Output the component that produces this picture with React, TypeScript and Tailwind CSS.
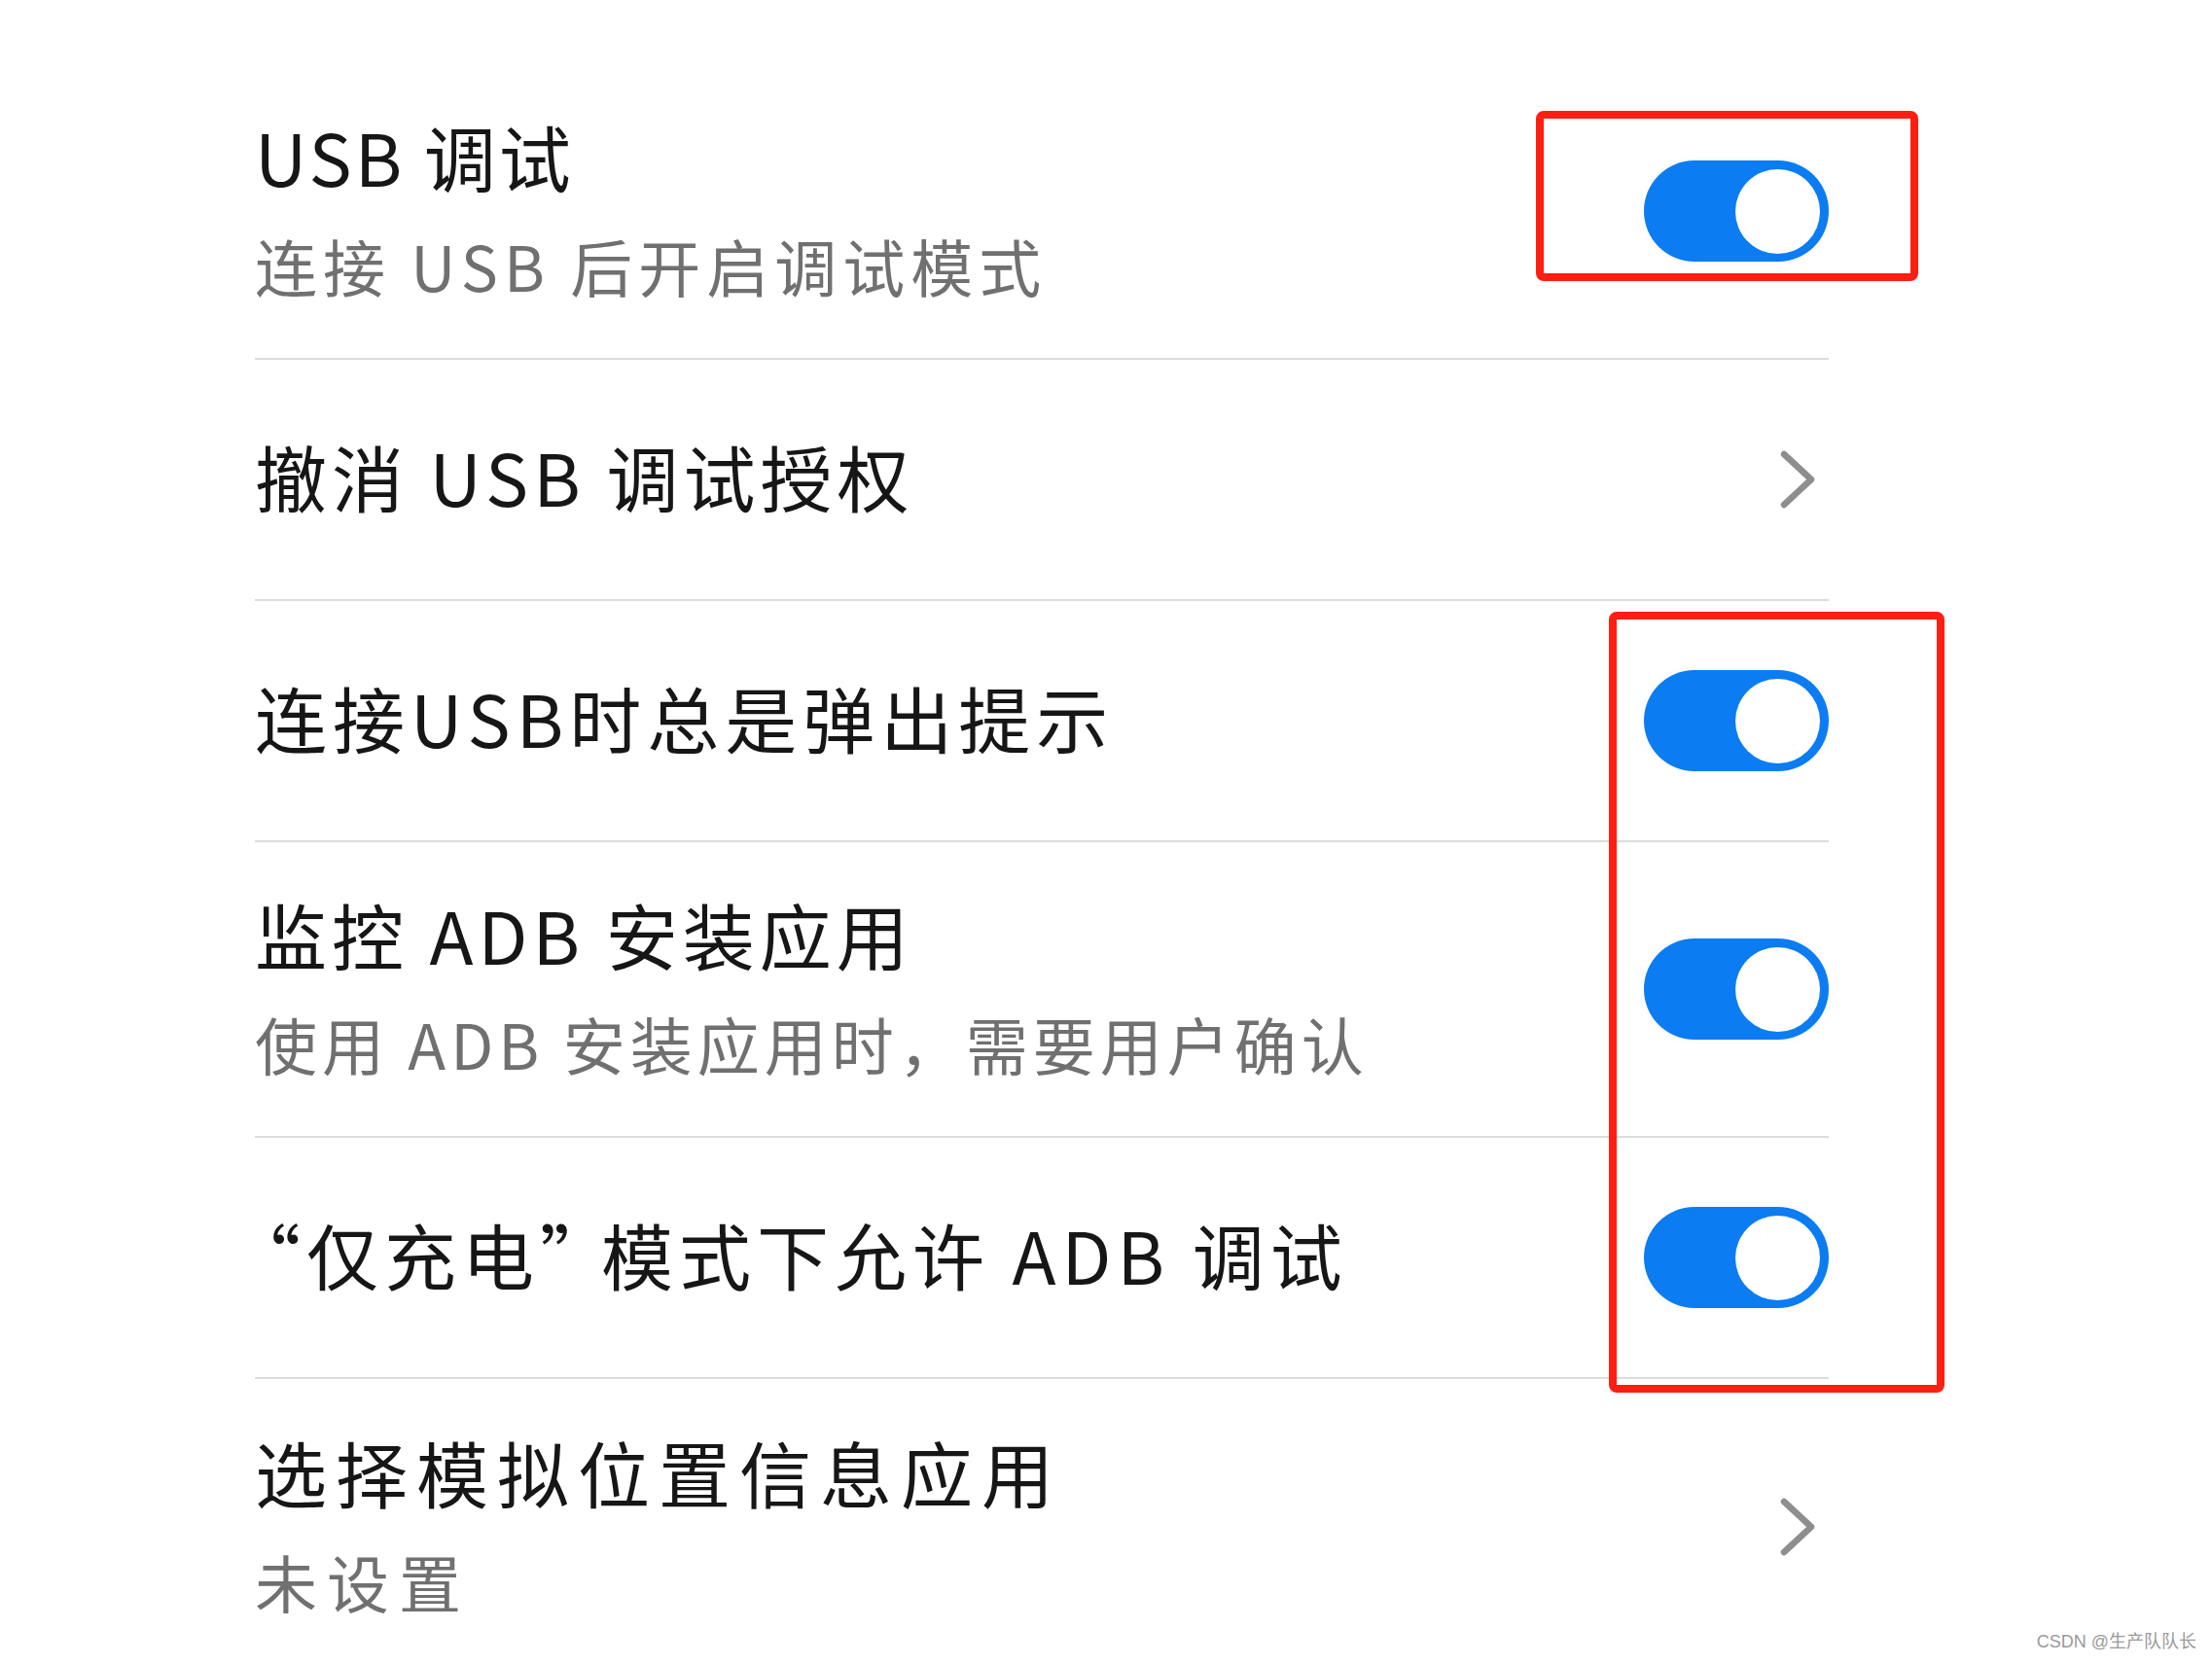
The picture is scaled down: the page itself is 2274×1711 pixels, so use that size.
import type { ReactNode } from 'react';

const rows: { title: ReactNode; sub?: string; kind: 'toggle' | 'link'; track: string; subTrack?: string }[] = [
	{ title: 'USB 调试', sub: '连接 USB 后开启调试模式', kind: 'toggle', track: 'tracking-[3px]', subTrack: 'tracking-[6px]' },
	{ title: '撤消 USB 调试授权', kind: 'link', track: 'tracking-[5px]' },
	{ title: '连接USB时总是弹出提示', kind: 'toggle', track: 'tracking-[6px]' },
	{ title: '监控 ADB 安装应用', sub: '使用 ADB 安装应用时，需要用户确认', kind: 'toggle', track: 'tracking-[5px]', subTrack: 'tracking-[5px]' },
	{
		title: (
			<>
				<span className="pl-[10px] [font-feature-settings:'halt']">“</span>仅充电<span className="pr-[20px] [font-feature-settings:'halt']">”</span>模式下允许 ADB 调试
			</>
		),
		kind: 'toggle',
		track: 'tracking-[6px]',
	},
	{ title: '选择模拟位置信息应用', sub: '未设置', kind: 'link', track: 'tracking-[9px]', subTrack: 'tracking-[10px]' },
];

function Toggle() {
	return (
		<span className="flex h-[104px] w-[190px] shrink-0 items-center justify-end rounded-full bg-[#0b7cf1] pr-[9px] shadow-[0_0_10px_rgba(0,0,0,0.04)]">
			<span className="size-[87px] rounded-full bg-white" />
		</span>
	);
}

function Chevron() {
	return (
		<svg width="44" height="68" viewBox="0 0 44 68" className="mr-[10px] shrink-0" fill="none">
			<polyline points="8,8 36,34 8,60" stroke="#8e8e8e" strokeWidth="6.5" strokeLinecap="round" strokeLinejoin="round" />
		</svg>
	);
}

export default function App() {
	return (
		<div className="relative h-[1711px] w-[2274px] overflow-hidden bg-white font-['Noto_Sans_CJK_SC',sans-serif]">
			<ul className="ml-[262px] w-[1618px] pt-[66px]">
				{rows.map((row, i) => (
					<li
						key={i}
						className={`flex items-center justify-between ${row.sub ? 'h-[304px]' : 'h-[248px]'} ${i < rows.length - 1 ? 'border-b-2 border-[#dcdcdc]' : ''}`}
					>
						<div className="flex flex-col pb-[8px]">
							<span className={`text-[74px] leading-[88px] text-[#161616] ${row.track}`}>{row.title}</span>
							{row.sub && <span className={`mt-[30px] text-[64px] leading-[76px] text-[#707070] ${row.subTrack}`}>{row.sub}</span>}
						</div>
						{row.kind === 'toggle' ? <Toggle /> : <Chevron />}
					</li>
				))}
			</ul>

			{/* annotation boxes */}
			<div className="absolute left-[1579px] top-[114px] h-[175px] w-[393px] rounded-[8px] border-[8px] border-[#ff1e12]" />
			<div className="absolute left-[1654px] top-[629px] h-[803px] w-[345px] rounded-[8px] border-[8px] border-[#ff1e12]" />

			<span className="absolute bottom-[9px] right-[16px] font-['Liberation_Sans','Noto_Sans_CJK_SC',sans-serif] text-[18px] text-[#9a9a9a]">CSDN @生产队队长</span>
		</div>
	);
}
